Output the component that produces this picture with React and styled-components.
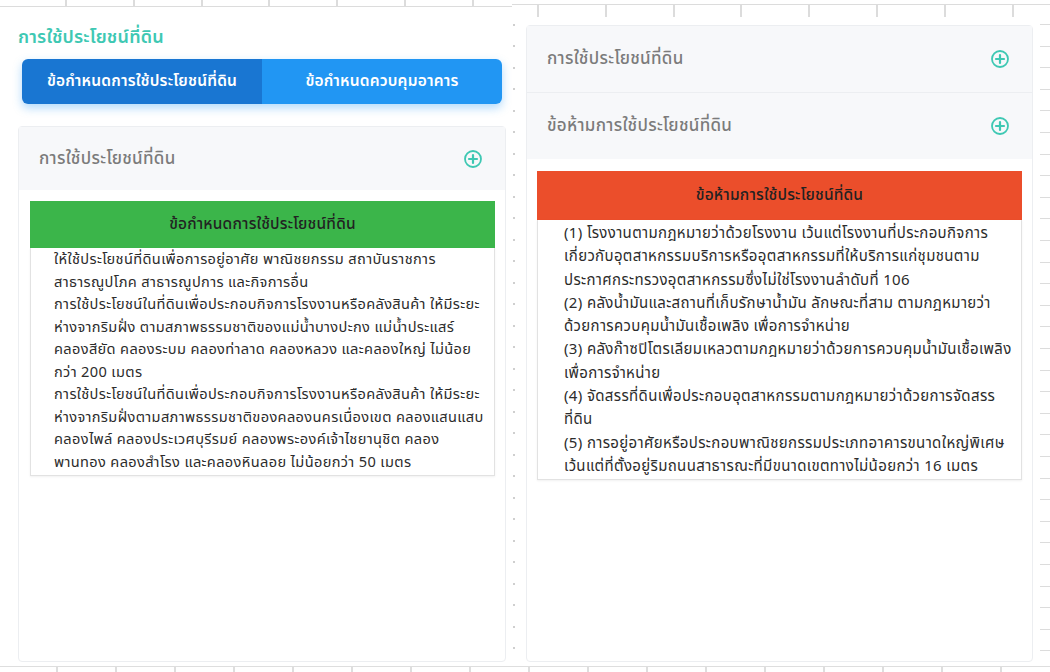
import React from "react";
import styled, { createGlobalStyle } from "styled-components";

const GlobalStyle = createGlobalStyle`
  html, body { margin: 0; padding: 0; background: #fff; }
  body {
    font-family: "Noto Sans Thai", "Noto Sans", "Liberation Sans", sans-serif;
    color: #333;
  }
  * { box-sizing: border-box; }
`;

const Page = styled.div`
  width: 1050px;
  height: 672px;
  display: flex;
  flex-direction: column;
  background: #fff;
  overflow: hidden;
`;

const Main = styled.div`
  flex: 1;
  display: flex;
  padding-bottom: 4px;
  min-height: 0;
`;

const BottomRuler = styled.div`
  height: 6px;
  border-top: 1px solid #dedede;
  background-image: repeating-linear-gradient(
    to right,
    transparent 0 56px,
    #dedede 56px 58px,
    transparent 58px 59px
  );
`;

const LeftPane = styled.section`
  width: 512px;
  display: flex;
  flex-direction: column;
  padding: 0 6px 0 18px;
`;

const TopRulerUp = styled.div`
  height: 7px;
  margin: 0 -6px 0 -18px;
  border-bottom: 1px solid #dcdcdc;
  background-image: repeating-linear-gradient(
    to right,
    transparent 0 65px,
    #dcdcdc 65px 67px,
    transparent 67px 67.8px
  );
`;

const PageTitle = styled.h2`
  margin: 19px 0 0;
  font-size: 18px;
  line-height: 24px;
  letter-spacing: 0.2px;
  font-weight: 600;
  color: #3ec8b3;
`;

const Tabs = styled.div`
  display: flex;
  height: 45px;
  margin: 9px 4px 0 4px;
  border-radius: 6px;
  overflow: hidden;
  box-shadow: 0 4px 10px rgba(33, 150, 243, 0.35);
`;

const Tab = styled.button`
  flex: 1;
  border: 0;
  margin: 0;
  padding: 0;
  font-family: inherit;
  font-size: 15.5px;
  letter-spacing: 0.2px;
  font-weight: 600;
  color: #fff;
  background: ${(p) => (p.$active ? "#1976d2" : "#2196f3")};
  cursor: pointer;
`;

const Card = styled.div`
  flex: 1;
  display: flex;
  flex-direction: column;
  border: 1px solid #eceef1;
  border-radius: 4px;
  background: #fff;
  margin-top: ${(p) => p.$top}px;
  min-height: 0;
`;

const AccHeader = styled.div`
  height: ${(p) => p.$h}px;
  display: flex;
  align-items: center;
  justify-content: space-between;
  padding: 0 22px 0 20px;
  background: #f7f8fa;
  border-bottom: ${(p) => (p.$divider ? "1px solid #eceef1" : "0")};
  font-size: 17px;
  letter-spacing: 0.3px;
  font-weight: 500;
  color: #7b7b7b;
`;

const AccBody = styled.div`
  padding: ${(p) => p.$pad};
`;

const Banner = styled.div`
  height: ${(p) => p.$h}px;
  display: flex;
  align-items: center;
  justify-content: center;
  background: ${(p) => p.$bg};
  font-size: 15.5px;
  letter-spacing: 0.2px;
  font-weight: 500;
  color: #222;
`;

const TextBox = styled.div`
  border: 1px solid #e2e2e2;
  border-top: 0;
  box-shadow: 0 1px 2px rgba(0, 0, 0, 0.06);
  padding: ${(p) => p.$pad};
  font-size: ${(p) => p.$fs}px;
  line-height: ${(p) => p.$lh}px;
  letter-spacing: 0.35px;
  color: #2c2c2c;
`;

const Line = styled.div`
  white-space: nowrap;
`;

const Gutter = styled.div`
  width: 14px;
  padding-top: 24px;
  display: flex;
`;

const Dots = styled.div`
  width: 2px;
  margin-left: 1px;
  background-image: repeating-linear-gradient(
    to bottom,
    #cfcfcf 0 2px,
    transparent 2px 21.5px
  );
`;

const RightPane = styled.section`
  flex: 1;
  display: flex;
  flex-direction: column;
`;

const TopRulerDown = styled.div`
  height: 17px;
  margin-left: -14px;
  background:
    linear-gradient(#dcdcdc, #dcdcdc) 0 4px / 100% 1px no-repeat,
    repeating-linear-gradient(
        to right,
        transparent 0 25px,
        #dcdcdc 25px 27px,
        transparent 27px 67.8px
      )
      0 4px / 100% 13px no-repeat;
`;

const RightRow = styled.div`
  flex: 1;
  display: flex;
  min-height: 0;
`;

const RightCardWrap = styled.div`
  width: 507px;
  display: flex;
  flex-direction: column;
`;

const EdgeTicks = styled.div`
  flex: 1;
  margin-left: 7px;
  background-image: repeating-linear-gradient(
    to bottom,
    transparent 0 7px,
    #dcdcdc 7px 8px,
    transparent 8px 21.6px
  );
`;

const PlusIcon = () => (
  <svg width="20" height="20" viewBox="0 0 20 20" aria-hidden="true">
    <circle cx="10" cy="10" r="8" fill="none" stroke="#3ec8b3" strokeWidth="1.8" />
    <path d="M10 6v8M6 10h8" stroke="#3ec8b3" strokeWidth="2.2" strokeLinecap="round" />
  </svg>
);

const leftLines = [
  "ให้ใช้ประโยชน์ที่ดินเพื่อการอยู่อาศัย พาณิชยกรรม สถาบันราชการ",
  "สาธารณูปโภค สาธารณูปการ และกิจการอื่น",
  "การใช้ประโยชน์ในที่ดินเพื่อประกอบกิจการโรงงานหรือคลังสินค้า ให้มีระยะ",
  "ห่างจากริมฝั่ง ตามสภาพธรรมชาติของแม่น้ำบางปะกง แม่น้ำประแสร์",
  "คลองสียัด คลองระบม คลองท่าลาด คลองหลวง และคลองใหญ่ ไม่น้อย",
  "กว่า 200 เมตร",
  "การใช้ประโยชน์ในที่ดินเพื่อประกอบกิจการโรงงานหรือคลังสินค้า ให้มีระยะ",
  "ห่างจากริมฝั่งตามสภาพธรรมชาติของคลองนครเนื่องเขต คลองแสนแสบ",
  "คลองไพล์ คลองประเวศบุรีรมย์ คลองพระองค์เจ้าไชยานุชิต คลอง",
  "พานทอง คลองสำโรง และคลองหินลอย ไม่น้อยกว่า 50 เมตร",
];

const rightLines = [
  "(1) โรงงานตามกฎหมายว่าด้วยโรงงาน เว้นแต่โรงงานที่ประกอบกิจการ",
  "เกี่ยวกับอุตสาหกรรมบริการหรืออุตสาหกรรมที่ให้บริการแก่ชุมชนตาม",
  "ประกาศกระทรวงอุตสาหกรรมซึ่งไม่ใช่โรงงานลำดับที่ 106",
  "(2) คลังน้ำมันและสถานที่เก็บรักษาน้ำมัน ลักษณะที่สาม ตามกฎหมายว่า",
  "ด้วยการควบคุมน้ำมันเชื้อเพลิง เพื่อการจำหน่าย",
  "(3) คลังก๊าซปิโตรเลียมเหลวตามกฎหมายว่าด้วยการควบคุมน้ำมันเชื้อเพลิง",
  "เพื่อการจำหน่าย",
  "(4) จัดสรรที่ดินเพื่อประกอบอุตสาหกรรมตามกฎหมายว่าด้วยการจัดสรร",
  "ที่ดิน",
  "(5) การอยู่อาศัยหรือประกอบพาณิชยกรรมประเภทอาคารขนาดใหญ่พิเศษ",
  "เว้นแต่ที่ตั้งอยู่ริมถนนสาธารณะที่มีขนาดเขตทางไม่น้อยกว่า 16 เมตร",
];

export default function App() {
  return (
    <Page>
      <GlobalStyle />
      <Main>
        <LeftPane>
          <TopRulerUp />
          <PageTitle>การใช้ประโยชน์ที่ดิน</PageTitle>
          <Tabs>
            <Tab $active>ข้อกำหนดการใช้ประโยชน์ที่ดิน</Tab>
            <Tab>ข้อกำหนดควบคุมอาคาร</Tab>
          </Tabs>
          <Card $top={22}>
            <AccHeader $h={63}>
              <span>การใช้ประโยชน์ที่ดิน</span>
              <PlusIcon />
            </AccHeader>
            <AccBody $pad="11px 10px 0 11px">
              <Banner $h={47} $bg="#3bb54a">ข้อกำหนดการใช้ประโยชน์ที่ดิน</Banner>
              <TextBox $pad="1px 4px 1px 23px" $fs={14.6} $lh={22.5}>
                {leftLines.map((t, i) => (
                  <Line key={i}>{t}</Line>
                ))}
              </TextBox>
            </AccBody>
          </Card>
        </LeftPane>
        <Gutter>
          <Dots />
        </Gutter>
        <RightPane>
          <TopRulerDown />
          <RightRow>
            <RightCardWrap>
              <Card $top={8}>
                <AccHeader $h={67} $divider>
                  <span>การใช้ประโยชน์ที่ดิน</span>
                  <PlusIcon />
                </AccHeader>
                <AccHeader $h={66}>
                  <span>ข้อห้ามการใช้ประโยชน์ที่ดิน</span>
                  <PlusIcon />
                </AccHeader>
                <AccBody $pad="12px 10px 0 10px">
                  <Banner $h={49} $bg="#eb4e2b">ข้อห้ามการใช้ประโยชน์ที่ดิน</Banner>
                  <TextBox $pad="2px 4px 1px 26px" $fs={15} $lh={23.3}>
                    {rightLines.map((t, i) => (
                      <Line key={i}>{t}</Line>
                    ))}
                  </TextBox>
                </AccBody>
              </Card>
            </RightCardWrap>
            <EdgeTicks />
          </RightRow>
        </RightPane>
      </Main>
      <BottomRuler />
    </Page>
  );
}
